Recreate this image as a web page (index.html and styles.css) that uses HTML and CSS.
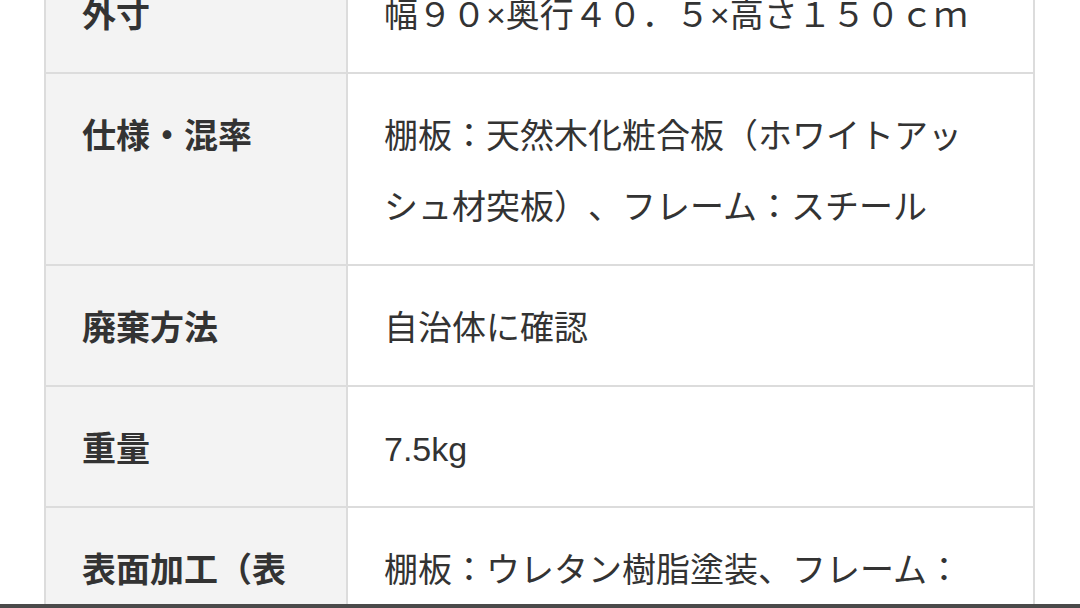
FILE: index.html
```html
<!DOCTYPE html>
<html lang="ja">
<head>
<meta charset="utf-8">
<link rel="stylesheet" href="styles.css">
</head>
<body>
<div class="wrap">
<table class="spec">
<colgroup><col class="c-label"><col class="c-value"></colgroup>
<tbody>
<tr><th>外寸</th><td>幅９０×奥行４０．５×高さ１５０ｃｍ</td></tr>
<tr><th>仕様・混率</th><td>棚板：天然木化粧合板（ホワイトアッシュ材突板）、フレーム：スチール</td></tr>
<tr><th>廃棄方法</th><td>自治体に確認</td></tr>
<tr><th>重量</th><td>7.5kg</td></tr>
<tr><th>表面加工（表面処理）</th><td>棚板：ウレタン樹脂塗装、フレーム：粉体塗装</td></tr>
</tbody>
</table>
</div>
<div class="edge"></div>
</body>
</html>
```
FILE: styles.css
```css
html, body {
  margin: 0;
  padding: 0;
  background: #ffffff;
  overflow: hidden;
  height: 608px;
}
.wrap {
  padding-left: 44px;
  margin-top: -49px;
}
.spec {
  width: 991px;
  table-layout: fixed;
  border-collapse: separate;
  border-spacing: 0;
  border-top: 2px solid #dcdcdc;
  font-family: "Liberation Sans", "Noto Sans CJK JP", sans-serif;
  font-size: 34px;
  line-height: 71px;
  color: #333333;
  text-spacing-trim: space-all;
}
.c-label { width: 304px; }
.c-value { width: 687px; }
.spec th,
.spec td {
  vertical-align: top;
  border-bottom: 2px solid #dcdcdc;
  border-right: 2px solid #dcdcdc;
  padding: 27px 40px 21px 36px;
  text-align: left;
  word-break: break-all;
}
.spec th {
  border-left: 2px solid #dcdcdc;
  background: #f3f3f3;
  font-weight: bold;
}
.spec td {
  font-weight: normal;
  background: #ffffff;
}
.edge {
  position: fixed;
  left: 0;
  right: 0;
  bottom: 0;
  height: 4px;
  background: #4a4a4a;
}
```
